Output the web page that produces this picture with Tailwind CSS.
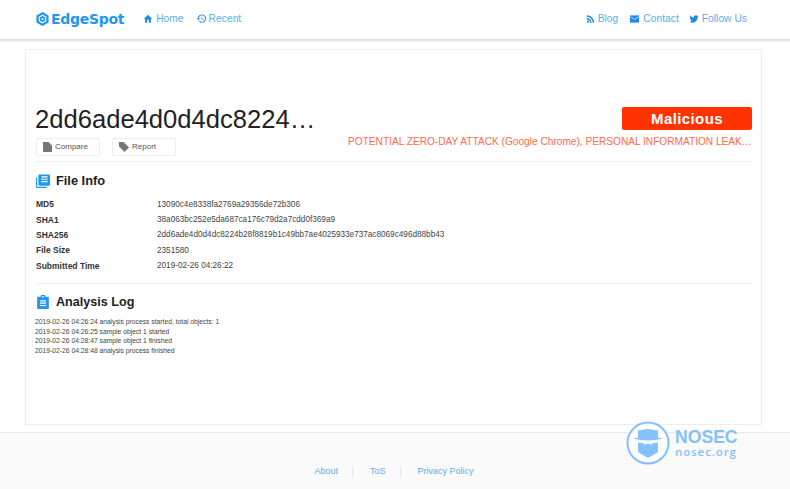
<!DOCTYPE html>
<html lang="en">
<head>
<meta charset="UTF-8">
<title>EdgeSpot</title>
<script src="https://cdn.jsdelivr.net/npm/@tailwindcss/browser@4"></script>
</head>
<body class="bg-white h-[489px] w-[790px] overflow-hidden relative flex flex-col font-['Liberation_Sans',Arial,sans-serif] text-[#222]">
  <!-- top nav -->
  <nav class="h-10 shrink-0 bg-white border-b border-[#ddd] shadow-[0_1px_2px_rgba(0,0,0,0.15)] flex items-center pl-9 pr-[43px] pb-[2px] text-[10.3px] text-[#5aaeea]">
    <a class="flex items-center gap-[2px] text-[#2196f3]">
      <svg width="13" height="14" viewBox="0 0 13 14"><path fill="#2196f3" d="M6.5 0 12.6 3.5V10.500L6.5 14 .4 10.500V3.500Z"/><path fill="none" stroke="#fff" stroke-width="1.2" d="M6.5 3.200 9.700 5V9L6.500 10.800 3.300 9V5Z"/><circle cx="6.500" cy="7" r="1.100" fill="#fff"/></svg>
      <span class="font-['DejaVu_Sans',sans-serif] font-bold text-[14px] tracking-[-0.3px] leading-none">EdgeSpot</span>
    </a>
    <a class="flex items-center gap-[3px] ml-[19px]">
      <svg width="10" height="10" viewBox="0 0 24 24"><path fill="#1e88e5" d="M10 21v-7h4v7h5v-9h3L12 2 2 12h3v9z"/></svg>Home
    </a>
    <a class="flex items-center gap-[2px] ml-[12px]">
      <svg width="11" height="11" viewBox="0 0 24 24"><path fill="#1e88e5" d="M13 3a9 9 0 0 0-9 9H1l4 4 4-4H6a7 7 0 1 1 2.050 4.950l-1.420 1.420A9 9 0 1 0 13 3zm-1 5v5l4.250 2.520.770-1.280-3.520-2.090V8z"/></svg>Recent
    </a>
    <a class="flex items-center gap-[3px] ml-auto">
      <svg width="9" height="10" viewBox="0 0 24 24"><circle cx="5" cy="19" r="3" fill="#1e88e5"/><path fill="#1e88e5" d="M2 9v4a9 9 0 0 1 9 9h4A13 13 0 0 0 2 9zm0-7v4a16 16 0 0 1 16 16h4A20 20 0 0 0 2 2z"/></svg>Blog
    </a>
    <a class="flex items-center gap-[4px] ml-[12px]">
      <svg width="9" height="8" viewBox="0 0 20 16"><rect width="20" height="16" fill="#1e88e5"/><path fill="none" stroke="#fff" stroke-width="1.600" d="M1 3l9 6 9-6"/></svg>Contact
    </a>
    <a class="flex items-center gap-[3px] ml-[10px]">
      <svg width="10" height="10" viewBox="0 0 24 24"><path fill="#1e88e5" d="M23 5a9 9 0 0 1-2.600.700 4.500 4.500 0 0 0 2-2.500 9 9 0 0 1-2.900 1.100 4.500 4.500 0 0 0-7.700 4.100A12.800 12.800 0 0 1 2.500 3.700a4.500 4.500 0 0 0 1.400 6 4.500 4.500 0 0 1-2-.6 4.500 4.500 0 0 0 3.600 4.500 4.500 4.500 0 0 1-2 .1 4.500 4.500 0 0 0 4.200 3.100A9 9 0 0 1 1 18.700 12.800 12.800 0 0 0 8 20.800c8.300 0 12.900-6.900 12.900-12.900v-.6A9 9 0 0 0 23 5z"/></svg>Follow Us
    </a>
  </nav>

  <!-- main card -->
  <main class="mt-[9px] ml-[25px] w-[737px] h-[376px] shrink-0 border border-[#eee] pl-[10px] pr-[9px]">
    <div class="mt-[54px] flex justify-between">
      <div class="w-[300px]">
        <h1 class="-ml-px text-[25.6px] leading-[30px] text-[#222] whitespace-nowrap">2dd6ade4d0d4dc8224…</h1>
        <div class="flex gap-3 mt-[4px]">
          <button class="w-[64px] h-[18px] border border-[#eee] rounded-[2px] flex items-center pl-[6px] gap-[3px] text-[8px] text-[#555]">
            <svg width="9" height="10" viewBox="0 0 9 10"><path fill="#777" d="M0 0H5.500L9 3.500V10H0Z"/></svg>Compare
          </button>
          <button class="w-[64px] h-[18px] border border-[#eee] rounded-[2px] flex items-center pl-[6px] gap-[3px] text-[8px] text-[#555]">
            <svg width="10" height="10" viewBox="0 0 10 10"><path fill="#777" d="M0 0H4.500L10 5.500 5.500 10 0 4.500Z"/></svg>Report
          </button>
        </div>
      </div>
      <div class="w-[410px] flex flex-col items-end">
        <div class="mt-[3px] w-[130px] h-[23px] pt-[1px] bg-[#ff3300] rounded-[2px] text-white font-bold text-[15px] tracking-[0.4px] flex items-center justify-center">Malicious</div>
        <div class="mt-[5px] text-[10.13px] leading-[14px] text-[#ff6a4d] whitespace-nowrap">POTENTIAL ZERO-DAY ATTACK (Google Chrome), PERSONAL INFORMATION LEAK…</div>
      </div>
    </div>
    <hr class="mt-[5px] border-[#eee]">

    <h2 class="mt-[10px] flex items-center gap-[6px] text-[12.8px] leading-[18px] font-bold text-[#222]">
      <svg width="14" height="14" viewBox="0 0 24 24"><path fill="#2196f3" d="M2 6H0v16a2 2 0 0 0 2 2h16v-2H2z"/><path fill="#2196f3" d="M22 1H6a2 2 0 0 0-2 2v15a2 2 0 0 0 2 2h16a2 2 0 0 0 2-2V3a2 2 0 0 0-2-2zM20 14H9v-2h11zm0-4H9V8h11zm0-4H9V4h11z"/></svg>File Info
    </h2>
    <dl class="mt-[7px] grid grid-cols-[121px_1fr] auto-rows-[15.4px] items-center text-[8.2px] text-[#444]">
      <dt class="font-bold text-[8.5px] text-[#333]">MD5</dt><dd>13090c4e8338fa2769a29356de72b306</dd>
      <dt class="font-bold text-[8.5px] text-[#333]">SHA1</dt><dd>38a063bc252e5da687ca176c79d2a7cdd0f369a9</dd>
      <dt class="font-bold text-[8.5px] text-[#333]">SHA256</dt><dd>2dd6ade4d0d4dc8224b28f8819b1c49bb7ae4025933e737ac8069c496d88bb43</dd>
      <dt class="font-bold text-[8.5px] text-[#333]">File Size</dt><dd>2351580</dd>
      <dt class="font-bold text-[8.5px] text-[#333]">Submitted Time</dt><dd>2019-02-26 04:26:22</dd>
    </dl>
    <hr class="mt-[9px] border-[#eee]">

    <h2 class="mt-[9px] flex items-center gap-[6px] text-[12.6px] leading-[18px] font-bold text-[#222]">
      <svg width="14" height="14" viewBox="0 0 24 24"><path fill="#2196f3" d="M21 3h-5a4 4 0 0 0-8 0H3a1 1 0 0 0-1 1v19a1 1 0 0 0 1 1h18a1 1 0 0 0 1-1V4a1 1 0 0 0-1-1zM12 1.500A1.500 1.500 0 1 1 12 4.500 1.500 1.500 0 0 1 12 1.500zM17 19H7v-2h10zm0-4H7v-2h10zm0-4H7V9h10z"/></svg>Analysis Log
    </h2>
    <div class="-ml-px mt-[6px] text-[6.75px] leading-[9.7px] text-[#444]">
      <div>2019-02-26 04:26:24 analysis process started, total objects: 1</div>
      <div>2019-02-26 04:26:25 sample object 1 started</div>
      <div>2019-02-26 04:28:47 sample object 1 finished</div>
      <div>2019-02-26 04:28:48 analysis process finished</div>
    </div>
  </main>

  <!-- footer -->
  <footer class="mt-[7px] flex-1 bg-[#fafafa] border-t border-[#e8e8e8] flex items-center justify-center pt-[22px] pr-[2px] text-[9px] text-[#5aaeea]">
    <a>About</a>
    <span class="w-px h-[10px] bg-[#e5e5e5] ml-[14px] mr-[17px]"></span>
    <a>ToS</a>
    <span class="w-px h-[10px] bg-[#e5e5e5] ml-[14px] mr-[17px]"></span>
    <a>Privacy Policy</a>
  </footer>

  <!-- watermark -->
  <div class="absolute left-[626px] top-[421px] flex items-center gap-[5px] text-[#84c1fb]">
    <svg width="44" height="44" viewBox="0 0 44 44">
      <circle cx="22" cy="22" r="20.500" fill="#fff" fill-opacity="0.5" stroke="#84c1fb" stroke-width="2"/>
      <path fill="#84c1fb" d="M12 9.500 22 8 32 9.500V17H12Z"/>
      <path fill="#84c1fb" d="M7 17.500Q22 14 37 17.500Q22 21.500 7 17.500Z"/>
      <path fill="#84c1fb" d="M12 22Q17 21 19 23.500 22 22 25 23.500 27 21 32 22V31L22 37 12 31Z"/>
    </svg>
    <div class="flex flex-col font-['Open_Sans',sans-serif] pt-[1px]">
      <span class="h-[16px] text-[17.6px] leading-[16px] font-bold font-['Liberation_Sans',sans-serif]">NOSEC</span>
      <span class="h-[13px] text-[11.5px] leading-[13px] font-semibold tracking-[0.9px]">nosec.org</span>
    </div>
  </div>
</body>
</html>
